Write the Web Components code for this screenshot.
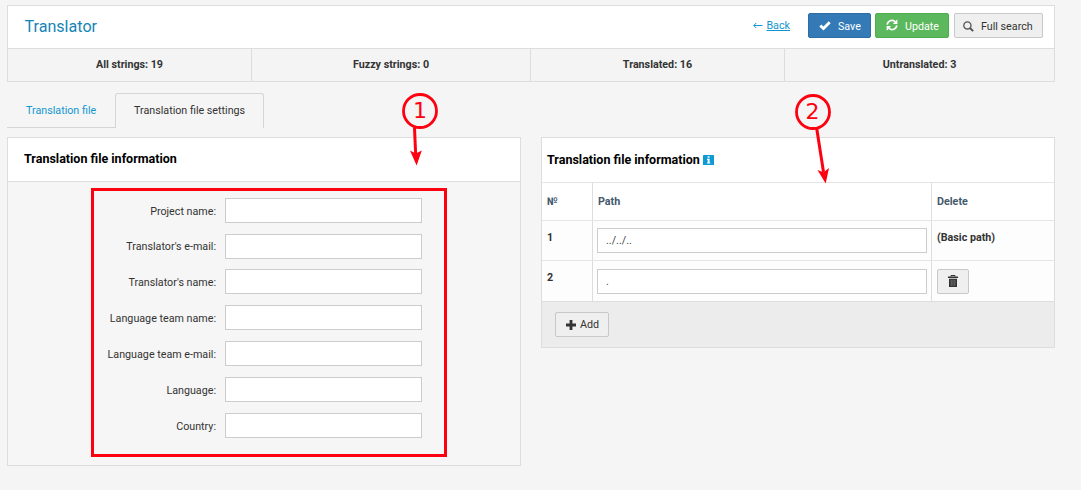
<!DOCTYPE html>
<html lang="en">
<head>
<meta charset="utf-8">
<title>Translator</title>
<style>
  body {
    margin: 0;
    padding: 5px 26px 0 7px;
    height: 485px;
    box-sizing: border-box;
    background: #f5f5f5;
    font: 10.73px/14px Roboto, "Liberation Sans", sans-serif;
    color: #333;
    overflow: hidden;
  }
  main {
    display: flex;
    align-items: flex-start;
    justify-content: space-between;
    margin-top: 9px;
  }
</style>
</head>
<body>
<page-header heading="Translator">
  <back-link>Back</back-link>
  <tool-button kind="save" icon="ok">Save</tool-button>
  <tool-button kind="update" icon="refresh">Update</tool-button>
  <tool-button kind="search" icon="search">Full search</tool-button>
</page-header>
<stat-bar>
  <span>All strings: 19</span>
  <span>Fuzzy strings: 0</span>
  <span>Translated: 16</span>
  <span>Untranslated: 3</span>
</stat-bar>
<tab-bar>
  <tab-item>Translation file</tab-item>
  <tab-item active>Translation file settings</tab-item>
</tab-bar>
<main>
  <info-form heading="Translation file information">
    <form-row>Project name:</form-row>
    <form-row>Translator's e-mail:</form-row>
    <form-row>Translator's name:</form-row>
    <form-row>Language team name:</form-row>
    <form-row>Language team e-mail:</form-row>
    <form-row>Language:</form-row>
    <form-row>Country:</form-row>
  </info-form>
  <path-table heading="Translation file information"></path-table>
</main>
<call-out></call-out>

<script>
const icons = {
  ok: `<svg width="12" height="10" viewBox="0 0 12 10"><path d="M.3 5.6 2.3 3.5 4.5 5.6 9.7.3 11.7 2.2 4.5 9.4z" fill="#fff"/></svg>`,
  refresh: `<svg width="12" height="12" viewBox="0 0 12 12"><g fill="none" stroke="#fff" stroke-width="1.7"><path d="M1.2 5.6A4.7 4.7 0 0 1 9 2.7"/><path d="M10.8 6.4A4.7 4.7 0 0 1 3 9.3"/></g><path d="M11.4.2V4.9H6.8zM.6 11.8V7.1H5.2z" fill="#fff"/></svg>`,
  search: `<svg width="11" height="11" viewBox="0 0 11 11" fill="none" stroke="#555"><circle cx="4.4" cy="4.4" r="3.6" stroke-width="1.3"/><path d="M7 7 10.1 10.1" stroke-width="2"/></svg>`,
  plus: `<svg width="10" height="10" viewBox="0 0 10 10"><path d="M3.6 0H6.4V3.6H10V6.4H6.4V10H3.6V6.4H0V3.6H3.6z" fill="#333"/></svg>`,
  trash: `<svg width="10" height="12" viewBox="0 0 10 12"><path d="M3 1.5V.5H7V1.5" fill="none" stroke="#333"/><path d="M0 1.5H10V3H0zM1 3.8H9V12H1z" fill="#333"/><path d="M3.2 4.8V10.8M5 4.8V10.8M6.8 4.8V10.8" stroke="#999" stroke-width=".6"/></svg>`,
  info: `<svg width="11" height="10" viewBox="0 0 11 10"><rect width="11" height="10" rx=".6" fill="#0e9bd5"/><path d="M4.6 1.3H6.6V2.8H4.6zM4 3.8H6.6V7.4H7.3V8.5H4V7.4H4.7V4.9H4z" fill="#fff"/></svg>`
};

// attach an open shadow root and fill it
function render(el, css, html) {
  el.attachShadow({mode: 'open'}).innerHTML = `<style>${css}</style>${html}`;
}

class PageHeader extends HTMLElement {
  constructor() {
    super();
    render(this, `
      :host {
        display: flex;
        align-items: flex-start;
        box-sizing: border-box;
        height: 43px;
        padding: 7px 11px 0 16.5px;
        background: #fff;
        border: 1px solid #ddd;
        border-bottom: 0;
      }
      h1 {
        margin: 3px auto 0 0;
        font-size: 16.1px;
        line-height: 22px;
        font-weight: 400;
        color: #1585b5;
      }`, `<h1>${this.getAttribute('heading')}</h1><slot></slot>`);
  }
}

class BackLink extends HTMLElement {
  constructor() {
    super();
    render(this, `
      :host { display: flex; gap: 3px; align-items: center; margin: 6px 18px 0 0; color: #1295d2; }
      a { text-decoration: underline; text-underline-offset: 1px; }
      svg { margin-top: -1px; }`,
      `<svg width="10" height="7" viewBox="0 0 10 7" fill="none" stroke="#1295d2"><path d="M.8 3.5H9.5M3.3 1 .8 3.5 3.3 6"/></svg><a><slot></slot></a>`);
  }
}

class ToolButton extends HTMLElement {
  constructor() {
    super();
    render(this, `
      :host {
        display: flex;
        align-items: center;
        box-sizing: border-box;
        height: 25px;
        padding-left: 9px;
        background: #efefef;
        border: 1px solid #c8c8c8;
        border-radius: 2px;
        color: #333;
      }
      svg { display: block; flex: none; }
      span { margin-left: 7px; position: relative; top: 1px; }
      :host([kind=save]) { width: 63px; margin-right: 4px; padding-left: 10px; background: #337ab7; border-color: #2e6da4; color: #fff; }
      :host([kind=update]) { width: 74px; margin-right: 5px; padding-left: 10px; background: #5cb85c; border-color: #4cae4c; color: #fff; }
      :host([kind=update]) svg { margin-top: -2px; }
      :host([kind=search]) { width: 89px; padding-left: 8px; }
      :host([kind=search]) svg { margin-top: 1px; }
      :host([kind=add]) { width: 54px; padding-left: 10px; }
      :host([kind=add]) span { margin-left: 4px; top: 0; }
      :host([kind=delete]) { width: 32px; padding-left: 10px; }
      :host([kind=delete]) svg { margin-top: -1px; }
      :host([kind=delete]) span { display: none; }`,
      `${icons[this.getAttribute('icon')]}<span><slot></slot></span>`);
  }
}

class StatBar extends HTMLElement {
  constructor() {
    super();
    render(this, `
      :host {
        display: grid;
        grid-template-columns: 243px 278px 253px 1fr;
        gap: 1px;
        box-sizing: border-box;
        height: 34px;
        border: 1px solid #ddd;
        background: #ddd;
      }
      ::slotted(span) { background: #f4f4f4; text-align: center; font-weight: 700; line-height: 31px; }`,
      `<slot></slot>`);
  }
}

class TabBar extends HTMLElement {
  constructor() {
    super();
    render(this, `:host { display: flex; height: 35px; margin-top: 11px; }`, `<slot></slot>`);
  }
}

class TabItem extends HTMLElement {
  constructor() {
    super();
    render(this, `
      :host {
        box-sizing: border-box;
        width: 108px;
        padding-left: 19px;
        line-height: 35px;
        color: #1295d2;
        border-bottom: 1px solid #d5d5d5;
      }
      :host([active]) {
        width: 149px;
        padding-left: 18px;
        line-height: 33px;
        color: #333;
        border: 1px solid #d5d5d5;
        border-bottom: 0;
        border-radius: 3px 3px 0 0;
      }`, `<slot></slot>`);
  }
}

class TextField extends HTMLElement {
  constructor() {
    super();
    render(this, `
      :host {
        display: block;
        box-sizing: border-box;
        height: 25px;
        padding-left: 8px;
        line-height: 24px;
        background: #fff;
        border: 1px solid #ccc;
        color: #444;
      }`, `<slot></slot>`);
  }
}

class FormRow extends HTMLElement {
  constructor() {
    super();
    render(this, `
      :host { display: grid; grid-template-columns: 208px 197px; column-gap: 9px; align-items: start; }
      label { text-align: right; line-height: 28px; }
      :host(:nth-child(2)) label { line-height: 26px; }`,
      `<label><slot></slot></label><text-field></text-field>`);
  }
}

class InfoForm extends HTMLElement {
  constructor() {
    super();
    render(this, `
      :host {
        display: block;
        box-sizing: border-box;
        width: 514px;
        height: 329px;
        border: 1px solid #ddd;
        background: #f6f6f6;
      }
      h2 {
        margin: 0;
        padding-left: 16px;
        font-size: 12.5px;
        line-height: 42px;
        height: 43px;
        color: #000;
        background: #fff;
        border-bottom: 1px solid #ddd;
      }
      form { display: grid; grid-template-rows: 36px 35px repeat(5, 36px); padding-top: 16px; }`,
      `<h2>${this.getAttribute('heading')}</h2><form><slot></slot></form>`);
  }
}

class PathTable extends HTMLElement {
  constructor() {
    super();
    render(this, `
      :host { display: block; box-sizing: border-box; width: 514px; height: 211px; border: 1px solid #ddd; background: #ececec; }
      h2 {
        display: flex;
        align-items: center;
        gap: 3px;
        margin: 0;
        padding-left: 5px;
        height: 44px;
        font-size: 12.5px;
        color: #000;
        background: #fff;
        border-bottom: 1px solid #e5e5e5;
      }
      h2 svg { margin-top: -1px; }
      .row { display: grid; grid-template-columns: 50px 339px 1fr; border-bottom: 1px solid #e5e5e5; background: #fdfdfd; font-weight: 700; }
      .row > div { box-sizing: border-box; padding: 10px 4px 0 5px; }
      .row > div:not(:first-child) { border-left: 1px solid #ddd; }
      .row > .edit { padding: 7px 4px 0; font-weight: 400; }
      .row > .del { padding-left: 5px; }
      .head { height: 37px; background: #fff; color: #44596c; }
      .head > div { padding-top: 12px; }
      .one, .two { height: 39px; }
      .two { height: 40px; border-color: #ddd; }
      .two > .edit, .two > .del { padding-top: 8px; }
      footer { padding: 10px 13px; }`,
      `<h2><span>${this.getAttribute('heading')}</span>${icons.info}</h2>
      <div class="row head"><div>№</div><div>Path</div><div>Delete</div></div>
      <div class="row one"><div>1</div><div class="edit"><text-field>../../..</text-field></div><div>(Basic path)</div></div>
      <div class="row two"><div>2</div><div class="edit"><text-field>.</text-field></div><div class="del"><tool-button kind="delete" icon="trash"></tool-button></div></div>
      <footer><tool-button kind="add" icon="plus">Add</tool-button></footer>`);
  }
}

// red markers drawn over the page
class CallOut extends HTMLElement {
  constructor() {
    super();
    render(this, `
      :host { position: absolute; left: 0; top: 0; width: 1081px; height: 490px; pointer-events: none; }
      svg { display: block; }
      text { font: 22px "DejaVu Sans", sans-serif; fill: #ff0010; text-anchor: middle; }`,
      `<svg width="1081" height="490" fill="none" stroke="#ff0010" stroke-width="3">
        <rect x="92.5" y="189.5" width="353" height="266"/>
        <circle cx="420" cy="111" r="16.5" stroke-width="2.8"/>
        <path d="M414.5 128 415.7 155"/>
        <path d="M416.6 165.5 410 150.5 415.8 153.6 421.8 150.5z" fill="#ff0010" stroke="none"/>
        <circle cx="813" cy="112" r="16.5" stroke-width="2.8"/>
        <path d="M816.8 129 823.5 172"/>
        <path d="M825.7 183.5 817.5 170 823.6 172.2 829 168z" fill="#ff0010" stroke="none"/>
        <text x="420" y="118" stroke="none">1</text>
        <text x="812.5" y="119" stroke="none">2</text>
      </svg>`);
  }
}

customElements.define('page-header', PageHeader);
customElements.define('back-link', BackLink);
customElements.define('tool-button', ToolButton);
customElements.define('stat-bar', StatBar);
customElements.define('tab-bar', TabBar);
customElements.define('tab-item', TabItem);
customElements.define('text-field', TextField);
customElements.define('form-row', FormRow);
customElements.define('info-form', InfoForm);
customElements.define('path-table', PathTable);
customElements.define('call-out', CallOut);
</script>
</body>
</html>
